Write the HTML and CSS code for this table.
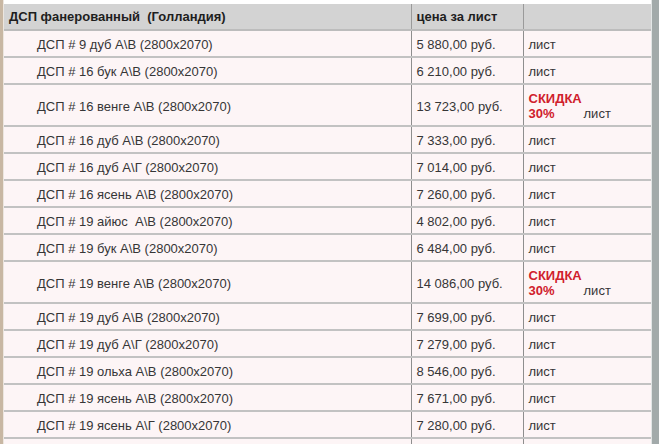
FILE: index.html
```html
<!DOCTYPE html>
<html lang="ru">
<head>
<meta charset="utf-8">
<title>ДСП фанерованный</title>
<link rel="stylesheet" href="styles.css">
</head>
<body>
<div class="page">
  <div class="strip-left"></div>
  <div class="main">
    <table class="price">
      <colgroup>
        <col class="c-name">
        <col class="c-price">
        <col class="c-unit">
      </colgroup>
      <thead>
        <tr><th>ДСП фанерованный&nbsp; (Голландия)</th><th>цена за лист</th><th></th></tr>
      </thead>
      <tbody>
        <tr><td class="name">ДСП # 9 дуб А\В (2800х2070)</td><td>5 880,00 руб.</td><td>лист</td></tr>
        <tr><td class="name">ДСП # 16 бук А\В (2800х2070)</td><td>6 210,00 руб.</td><td>лист</td></tr>
        <tr><td class="name">ДСП # 16 венге А\В (2800х2070)</td><td>13 723,00 руб.</td><td><span class="sale">СКИДКА</span><br><span class="sale">30%</span><span class="gap">лист</span></td></tr>
        <tr><td class="name">ДСП # 16 дуб А\В (2800х2070)</td><td>7 333,00 руб.</td><td>лист</td></tr>
        <tr><td class="name">ДСП # 16 дуб А\Г (2800х2070)</td><td>7 014,00 руб.</td><td>лист</td></tr>
        <tr><td class="name">ДСП # 16 ясень А\В (2800х2070)</td><td>7 260,00 руб.</td><td>лист</td></tr>
        <tr><td class="name">ДСП # 19 айюс&nbsp; А\В (2800х2070)</td><td>4 802,00 руб.</td><td>лист</td></tr>
        <tr><td class="name">ДСП # 19 бук А\В (2800х2070)</td><td>6 484,00 руб.</td><td>лист</td></tr>
        <tr><td class="name">ДСП # 19 венге А\В (2800х2070)</td><td>14 086,00 руб.</td><td><span class="sale">СКИДКА</span><br><span class="sale">30%</span><span class="gap">лист</span></td></tr>
        <tr><td class="name">ДСП # 19 дуб А\В (2800х2070)</td><td>7 699,00 руб.</td><td>лист</td></tr>
        <tr><td class="name">ДСП # 19 дуб А\Г (2800х2070)</td><td>7 279,00 руб.</td><td>лист</td></tr>
        <tr><td class="name">ДСП # 19 ольха А\В (2800х2070)</td><td>8 546,00 руб.</td><td>лист</td></tr>
        <tr><td class="name">ДСП # 19 ясень А\В (2800х2070)</td><td>7 671,00 руб.</td><td>лист</td></tr>
        <tr><td class="name">ДСП # 19 ясень А\Г (2800х2070)</td><td>7 280,00 руб.</td><td>лист</td></tr>
        <tr><td class="name">&nbsp;</td><td>&nbsp;</td><td>&nbsp;</td></tr>
      </tbody>
    </table>
  </div>
  <div class="scroll"></div>
</div>
</body>
</html>
```

FILE: styles.css
```css
html, body {
  margin: 0;
  padding: 0;
  background: #ffffff;
}

body {
  font-family: "Liberation Sans", Arial, sans-serif;
  font-size: 13px;
  color: #363636;
}

.page {
  display: flex;
  height: 444px;
  overflow: hidden;
}

.strip-left {
  width: 3px;
  flex: none;
  background: #c8b7a3;
  border-right: 1px solid #ece6df;
}

.main {
  flex: 1;
  padding-top: 4px;
  background: #ffffff;
}

.scroll {
  width: 7px;
  flex: none;
  background: #a2aaaa;
  border-left: 1px solid #e2e6e6;
}

.price {
  width: 100%;
  border-collapse: collapse;
  table-layout: fixed;
}

.c-name { width: 407px; }
.c-price { width: 112px; }

.price th {
  background: #d3d3d3;
  height: 25px;
  padding: 0 5px;
  text-align: left;
  font-weight: bold;
  color: #1e1e1e;
  line-height: 15px;
  border-left: 1px solid #9a9a9a;
  border-bottom: 2px solid #bcbcbc;
}

.price th:first-child,
.price td:first-child {
  border-left: none;
}

.price td {
  background: #fdf5f6;
  padding: 6px 5px 4px;
  line-height: 15px;
  height: 15px;
  vertical-align: middle;
  border-left: 1px solid #8e8e8e;
  border-bottom: 2px solid #c2c2c2;
  white-space: nowrap;
}

.price td.name {
  padding-left: 33px;
}

.sale {
  color: #d0202c;
  font-weight: bold;
}

.gap {
  margin-left: 29px;
}
```
